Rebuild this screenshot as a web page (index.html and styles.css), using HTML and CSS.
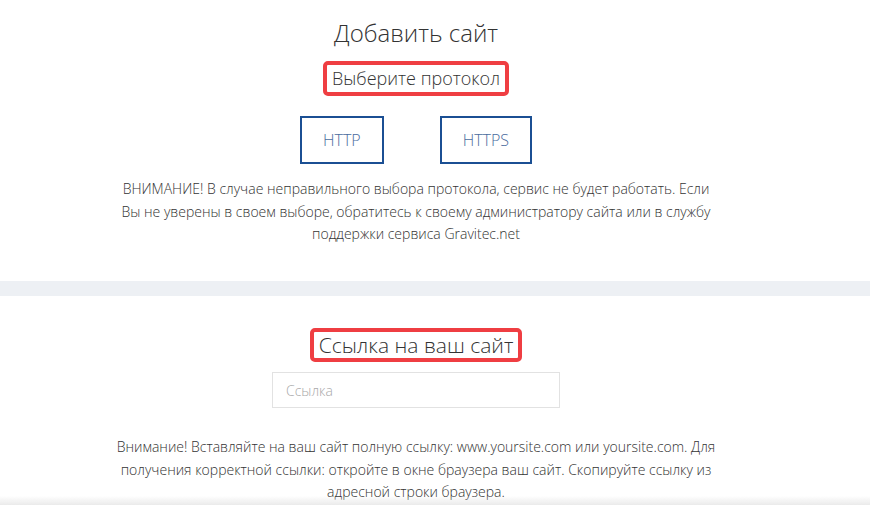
FILE: index.html
```html
<!DOCTYPE html>
<html lang="ru">
<head>
<meta charset="utf-8">
<title>Добавить сайт</title>
<link rel="stylesheet" href="styles.css">
</head>
<body>
<div class="page">
  <section class="block block-protocol">
    <h1 class="title">Добавить сайт</h1>
    <div class="marked marked-small">Выберите протокол</div>
    <div class="buttons">
      <button class="proto">HTTP</button>
      <button class="proto">HTTPS</button>
    </div>
    <p class="note note-top">ВНИМАНИЕ! В случае неправильного выбора протокола, сервис не будет работать. Если Вы не уверены в своем выборе, обратитесь к своему администратору сайта или в службу поддержки сервиса Gravitec.net</p>
  </section>
  <div class="divider"></div>
  <section class="block block-link">
    <div class="marked marked-large">Ссылка на ваш сайт</div>
    <input class="link-input" type="text" placeholder="Ссылка">
    <p class="note note-bottom">Внимание! Вставляйте на ваш сайт полную ссылку: www.yoursite.com или yoursite.com. Для получения корректной ссылки: откройте в окне браузера ваш сайт. Скопируйте ссылку из адресной строки браузера.</p>
  </section>
</div>
<div class="bottom-fade"></div>
</body>
</html>
```

FILE: styles.css
```css
html, body {
  margin: 0;
  padding: 0;
  background: #ffffff;
}
body {
  font-family: "Open Sans", "Noto Sans", sans-serif;
  font-weight: 300;
  color: #333333;
  overflow: hidden;
}
.block {
  width: 832px;
  display: flex;
  flex-direction: column;
  align-items: center;
}
.block-protocol {
  padding-top: 17px;
  height: 281px;
  box-sizing: border-box;
}
.title {
  margin: 0;
  font-size: 24px;
  font-weight: 300;
  line-height: 32px;
  color: #333;
}
.marked {
  border: 4px solid #ef3e42;
  border-radius: 5px;
  color: #333;
  font-weight: 300;
}
.marked-small {
  margin-top: 12px;
  font-size: 18px;
  line-height: 27px;
  padding: 0 5px;
}
.marked-large {
  font-size: 21px;
  line-height: 26px;
  padding: 0 5px;
}
.buttons {
  display: flex;
  gap: 56px;
  margin-top: 20px;
}
.proto {
  height: 48px;
  padding: 0 21px;
  border: 2px solid #1b4f93;
  background: #fff;
  color: #4a6c9e;
  font-family: "Open Sans", "Noto Sans", sans-serif;
  font-weight: 300;
  font-size: 16px;
  line-height: 44px;
  border-radius: 0;
}
.note {
  margin: 0;
  font-size: 14px;
  line-height: 22.5px;
  text-align: center;
  color: #333;
}
.note-top {
  margin-top: 14px;
  max-width: 600px;
}
.divider {
  height: 15px;
  background: #edf0f4;
}
.block-link {
  padding-top: 32px;
}
.link-input {
  margin-top: 10px;
  width: 288px;
  height: 36px;
  box-sizing: border-box;
  border: 1px solid #e2e2e2;
  padding: 0 13px;
  font-family: "Open Sans", "Noto Sans", sans-serif;
  font-weight: 300;
  font-size: 14px;
  color: #333;
  outline: none;
}
.link-input::placeholder {
  color: #a9a9a9;
}
.note-bottom {
  margin-top: 28px;
  max-width: 620px;
}
.bottom-fade {
  position: fixed;
  left: 0;
  right: 0;
  bottom: 0;
  height: 9px;
  background: linear-gradient(to bottom, rgba(230,230,230,0), rgba(225,225,225,0.7));
  pointer-events: none;
}
```
